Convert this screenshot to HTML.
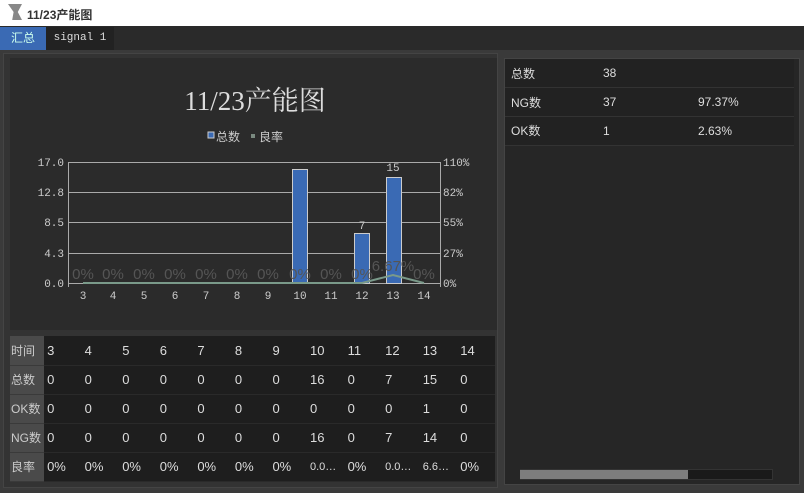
<!DOCTYPE html>
<html><head><meta charset="utf-8"><style>
*{margin:0;padding:0;box-sizing:border-box}
body{width:804px;height:493px;background:#3a3a3a;position:relative;overflow:hidden;font-family:"Liberation Sans","Noto Sans CJK SC",sans-serif;color:#ddd}
.abs{position:absolute}
.tb{left:0;top:0;width:804px;height:26px;background:#fff;color:#333;font-size:12px;font-weight:bold}
.tabs{left:0;top:26px;width:804px;height:24px;background:#2a2a2a}
.t1{left:0;top:27px;width:46px;height:23px;background:#3a6ab4;color:#cfe;font-size:12px;text-align:center;line-height:23px}
.t2{left:46px;top:27px;width:68px;height:23px;background:#222;color:#ddd;font-family:"Liberation Mono",monospace;font-size:11px;text-align:center;line-height:23px}
.lp{left:3px;top:53px;width:495px;height:435px;background:#333;border:1px solid #444}
.chart{left:10px;top:58px;width:487px;height:272px;background:#2b2b2b}
table{border-collapse:collapse}
.dt{left:10px;top:336px;width:485px;height:146px;background:#1e1e1e;table-layout:fixed}
.dt td{height:29px;font-size:13px;color:#ddd;padding-left:3px;border-bottom:1px solid #2a2a2a;white-space:nowrap;overflow:hidden}
.dt td.h{background:#4a4a4a;color:#ccc;padding-left:1px;font-size:12px;border-bottom:1px solid #3a3a3a}
.rp{left:504px;top:58px;width:296px;height:427px;background:#262626;border:1px solid #444}
.rt{left:505px;top:59px;width:289px}
.rt td{height:28.7px;font-size:12px;color:#ddd;padding-left:6px;border-bottom:1px solid #333;background:#222}
</style></head><body>
<div class="abs tb"><span style="position:absolute;left:8px;top:4px;width:14px;height:16px;background:#888;clip-path:polygon(0 0,100% 0,70% 50%,100% 100%,30% 100%,40% 50%)"></span><span style="position:absolute;left:27px;top:6px">11/23产能图</span></div>
<div class="abs tabs"></div>
<div class="abs t1">汇总</div>
<div class="abs t2">signal 1</div>
<div class="abs lp"></div>
<div class="abs chart"></div>
<svg class="abs" style="left:0;top:0" width="500" height="330" font-family="Liberation Mono,monospace">
<text x="255" y="110" fill="#ddd" font-size="27" text-anchor="middle" font-family="Liberation Serif,Noto Serif CJK SC,serif">11/23产能图</text>
<rect x="208" y="132" width="6" height="6" fill="#3a6ab4" stroke="#ccc"/>
<text x="216" y="141" fill="#ccc" font-size="12" font-family="Noto Sans CJK SC,sans-serif">总数</text>
<rect x="251" y="134" width="4" height="4" fill="#7a8a80"/>
<text x="259" y="141" fill="#ccc" font-size="12" font-family="Noto Sans CJK SC,sans-serif">良率</text>
<g stroke="#aaa" stroke-width="1">
<line x1="68" y1="162.5" x2="440" y2="162.5"/><line x1="68" y1="192.5" x2="440" y2="192.5"/><line x1="68" y1="222.5" x2="440" y2="222.5"/><line x1="68" y1="253.5" x2="440" y2="253.5"/><line x1="68" y1="283.5" x2="440" y2="283.5"/>
<line x1="68.5" y1="162" x2="68.5" y2="287"/><line x1="440.5" y1="162" x2="440.5" y2="287"/>
</g>
<g fill="#ccc" font-size="11" text-anchor="end">
<text x="64" y="166">17.0</text><text x="64" y="196">12.8</text><text x="64" y="226">8.5</text><text x="64" y="257">4.3</text><text x="64" y="287">0.0</text>
</g>
<g fill="#ccc" font-size="11">
<text x="443" y="166">110%</text><text x="443" y="196">82%</text><text x="443" y="226">55%</text><text x="443" y="257">27%</text><text x="443" y="287">0%</text>
</g>
<g fill="#3a6ab4" stroke="#ccc" stroke-width="1">
<rect x="292.5" y="169.5" width="15" height="114"/><rect x="354.5" y="233.5" width="15" height="50"/><rect x="386.5" y="177.5" width="15" height="106"/>
</g>
<g fill="#ccc" font-size="11" text-anchor="middle">
<text x="362" y="229">7</text><text x="393" y="171">15</text>
<text x="83" y="299">3</text><text x="113" y="299">4</text><text x="144" y="299">5</text><text x="175" y="299">6</text><text x="206" y="299">7</text><text x="237" y="299">8</text><text x="268" y="299">9</text><text x="300" y="299">10</text><text x="331" y="299">11</text><text x="362" y="299">12</text><text x="393" y="299">13</text><text x="424" y="299">14</text>
</g>
<g fill="#555" font-size="15" text-anchor="middle" font-family="Liberation Sans,sans-serif">
<text x="83" y="279">0%</text><text x="113" y="279">0%</text><text x="144" y="279">0%</text><text x="175" y="279">0%</text><text x="206" y="279">0%</text><text x="237" y="279">0%</text><text x="268" y="279">0%</text><text x="300" y="279">0%</text><text x="331" y="279">0%</text><text x="362" y="279">0%</text><text x="393" y="271">6.67%</text><text x="424" y="279">0%</text>
</g>
<polyline points="83,283 362,283 393,275 424,283" fill="none" stroke="#7a9a8a" stroke-width="2"/>
</svg>
<table class="abs dt">
<colgroup><col style="width:34px"><col span="12" style="width:37.5px"></colgroup>
<tr><td class="h">时间</td><td>3</td><td>4</td><td>5</td><td>6</td><td>7</td><td>8</td><td>9</td><td>10</td><td>11</td><td>12</td><td>13</td><td>14</td></tr>
<tr><td class="h">总数</td><td>0</td><td>0</td><td>0</td><td>0</td><td>0</td><td>0</td><td>0</td><td>16</td><td>0</td><td>7</td><td>15</td><td>0</td></tr>
<tr><td class="h">OK数</td><td>0</td><td>0</td><td>0</td><td>0</td><td>0</td><td>0</td><td>0</td><td>0</td><td>0</td><td>0</td><td>1</td><td>0</td></tr>
<tr><td class="h">NG数</td><td>0</td><td>0</td><td>0</td><td>0</td><td>0</td><td>0</td><td>0</td><td>16</td><td>0</td><td>7</td><td>14</td><td>0</td></tr>
<tr><td class="h">良率</td><td>0%</td><td>0%</td><td>0%</td><td>0%</td><td>0%</td><td>0%</td><td>0%</td><td style="font-size:11px">0.0…</td><td>0%</td><td style="font-size:11px">0.0…</td><td style="font-size:11px">6.6…</td><td>0%</td></tr>
</table>
<div class="abs rp"></div>
<table class="abs rt">
<tr><td style="width:92px">总数</td><td style="width:95px">38</td><td></td></tr>
<tr><td>NG数</td><td>37</td><td>97.37%</td></tr>
<tr><td>OK数</td><td>1</td><td>2.63%</td></tr>
</table>
<div class="abs" style="left:520px;top:469px;width:253px;height:11px;background:#1a1a1a;border:1px solid #333"></div>
<div class="abs" style="left:520px;top:470px;width:168px;height:9px;background:#7d7d7d"></div>
</body></html>
